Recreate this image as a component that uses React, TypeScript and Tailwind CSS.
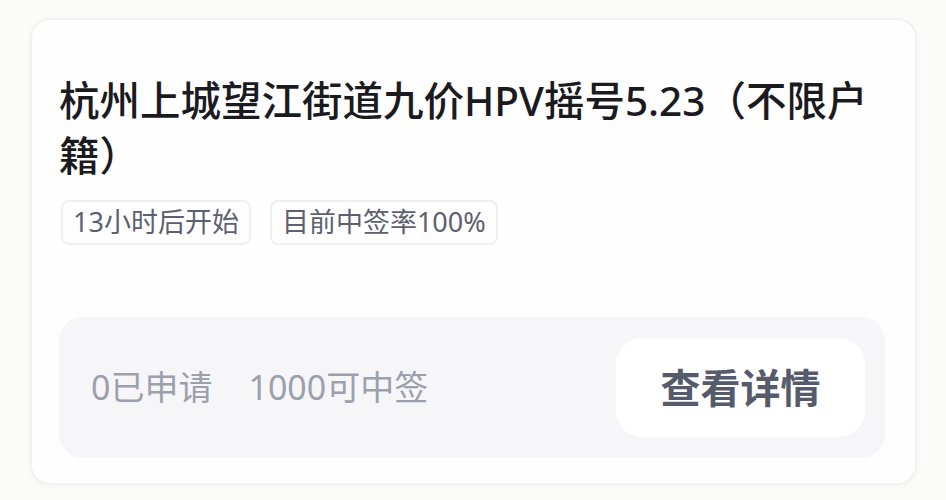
import React from 'react';

const font = { fontFamily: '"Noto Sans", "Noto Sans CJK SC", sans-serif' };

const Tag = ({ children }: { children: React.ReactNode }) => (
  <span className="inline-flex h-[45px] items-center rounded-[8px] border-2 border-[#eeeff2] px-[10px] text-[27px] text-[#5d6070]">
    {children}
  </span>
);

export default function App() {
  return (
    <div className="min-h-screen w-full bg-[#fbfbfa] pl-[30px] pt-[18px]" style={font}>
      <div className="w-[887px] rounded-[20px] border-2 border-[#f1f1f1] bg-[#fefefe] pb-[25px] pl-[27px] pr-[30px] pt-[53px] shadow-[0_2px_6px_rgba(0,0,0,0.03)]">
        <h1 className="text-[40.5px] font-medium leading-[55px] text-[#1b1b1f]">
          杭州上城望江街道九价HPV摇号5.23（不限户籍）
        </h1>
        <div className="mt-[17px] flex gap-[19px] pl-[2px]">
          <Tag>13小时后开始</Tag>
          <Tag>目前中签率100%</Tag>
        </div>

        <div className="mt-[72px] flex h-[141px] items-center justify-between rounded-[24px] bg-[#f6f6f8] pl-[32px] pr-[20px]">
          <div className="flex gap-[36px] text-[34px] text-[#9c9fac]">
            <span>0已申请</span>
            <span>1000可中签</span>
          </div>
          <button className="flex h-[99px] w-[249px] items-center justify-center rounded-[26px] bg-white text-[40px] font-bold text-[#565b6b]">
            查看详情
          </button>
        </div>
      </div>
    </div>
  );
}
